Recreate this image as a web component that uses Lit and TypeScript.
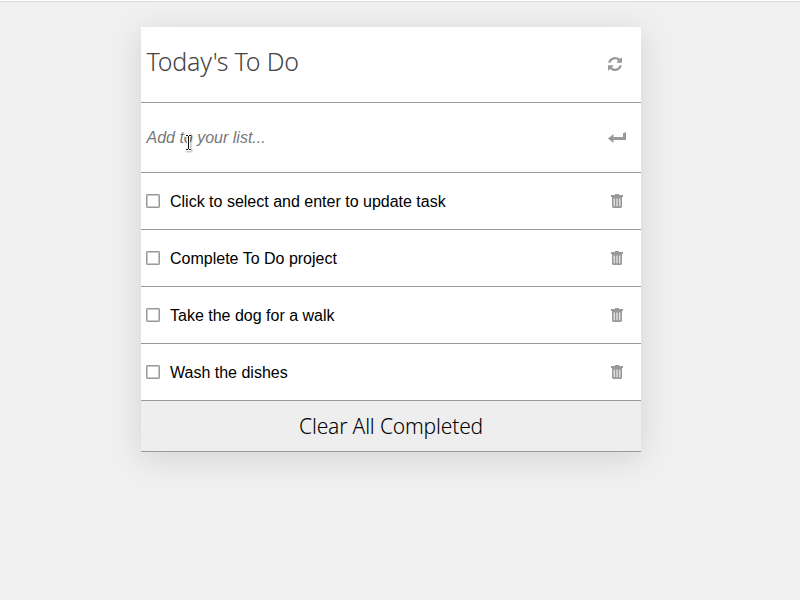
import { LitElement, html, css } from "lit";
import { customElement } from "lit/decorators.js";

const TASKS = ["Click to select and enter to update task", "Complete To Do project", "Take the dog for a walk", "Wash the dishes"];

const refreshIcon = html`<svg class="refresh" width="14" height="14" viewBox="0 0 1536 1536"><path d="M1511 928q0 5-1 7-64 268-268 434.500T764 1536q-146 0-282.500-55T238 1324l-129 129q-19 19-45 19t-45-19-19-45V960q0-26 19-45t45-19h448q26 0 45 19t19 45-19 45l-137 137q71 66 161 102t187 36q134 0 250-65t186-179q11-17 53-117 8-23 30-23h192q13 0 22.500 9.500t9.500 22.500zm25-800v448q0 26-19 45t-45 19h-448q-26 0-45-19t-19-45 19-45l138-138Q969 256 768 256q-134 0-250 65T332 500q-11 17-53 117-8 23-30 23H50q-13 0-22.500-9.500T18 608v-7q65-268 270-434.500T768 0q146 0 284 55.500T1297 212l130-129q19-19 45-19t45 19 19 45z"/></svg>`;

const enterIcon = html`<svg class="enter" width="18" height="11" viewBox="0 0 18 11"><path d="M0 6.500L5.500 2V5H15V1.200L18 0V8H5.500V11Z"/></svg>`;

const trashIcon = html`<svg class="trash" width="12" height="14" viewBox="0 0 12 14"><path d="M4 0H8V1H12V3H0V1H4Z"/><path fill-rule="evenodd" d="M1 3H11V13L10 14H2L1 13ZM2.700 4.500V12.200H3.700V4.500ZM5.500 4.500V12.200H6.500V4.500ZM8.300 4.500V12.200H9.300V4.500Z"/></svg>`;

const cursorIcon = html`<svg class="cursor" width="12" height="20" viewBox="0 0 12 20"><path class="halo" d="M2 2.500H4.500L5.500 3.500L6.500 2.500H8M5.500 3V16M2 16.500H4.500L5.500 15.500L6.500 16.500H8"/><path class="beam" d="M3 2.500H5M6 2.500H8M5.500 3V16M3 16.500H5M6 16.500H8"/></svg>`;

@customElement("app-root")
class AppRoot extends LitElement {
  static styles = css`
    * { box-sizing: border-box; }
    :host { display: block; height: 600px; overflow: hidden; background: #f0f0f0; border-top: 1px solid #fff; color: #000; font: 16px "Liberation Sans", Arial, sans-serif; }
    .page { height: 599px; border-top: 1px solid #d8dad9; padding-top: 25px; }
    .card { position: relative; width: 500px; margin-left: 141px; background: #fff; box-shadow: 0 6px 30px rgba(0,0,0,.12); }
    .row { display: flex; align-items: center; border-bottom: 1px solid #999; padding: 0 18px 0 5px; height: 57px; }
    .head { height: 76px; padding-right: 19.5px; }
    .add { height: 70px; padding-right: 15px; }
    .title { flex: 1; font: 300 25px "Noto Sans", sans-serif; letter-spacing: -.22px; color: #444; padding: 0 0 8px .5px; }
    .refresh { margin-bottom: 1px; }
    .hint { flex: 1; font-style: italic; color: #777; padding-left: .5px; }
    .task { flex: 1; padding-top: 2px; }
    .box { width: 14px; height: 14px; border: 1px solid #999; border-radius: 1px; box-shadow: inset 0 0 0 1px #c8c8c8; margin-right: 10px; }
    .clear { height: 51px; background: #eee; justify-content: center; padding: 0; font: 300 21px "Noto Sans", sans-serif; letter-spacing: -.17px; }
    svg { display: block; fill: #999; }
    .cursor { position: absolute; left: 42px; top: 106px; }
    .halo { fill: none; stroke: #fff; stroke-width: 3; filter: drop-shadow(1px 1px 1px rgba(0,0,0,.35)); }
    .beam { fill: none; stroke: #111; stroke-width: 1; }
  `;
  render() {
    return html`<div class="page"><div class="card">
      <div class="row head"><span class="title">Today's To Do</span>${refreshIcon}</div>
      <div class="row add"><span class="hint">Add to your list...</span>${enterIcon}</div>
      ${TASKS.map((t) => html`<div class="row"><span class="box"></span><span class="task">${t}</span>${trashIcon}</div>`)}
      <div class="row clear">Clear All Completed</div>
      ${cursorIcon}
    </div></div>`;
  }
}
